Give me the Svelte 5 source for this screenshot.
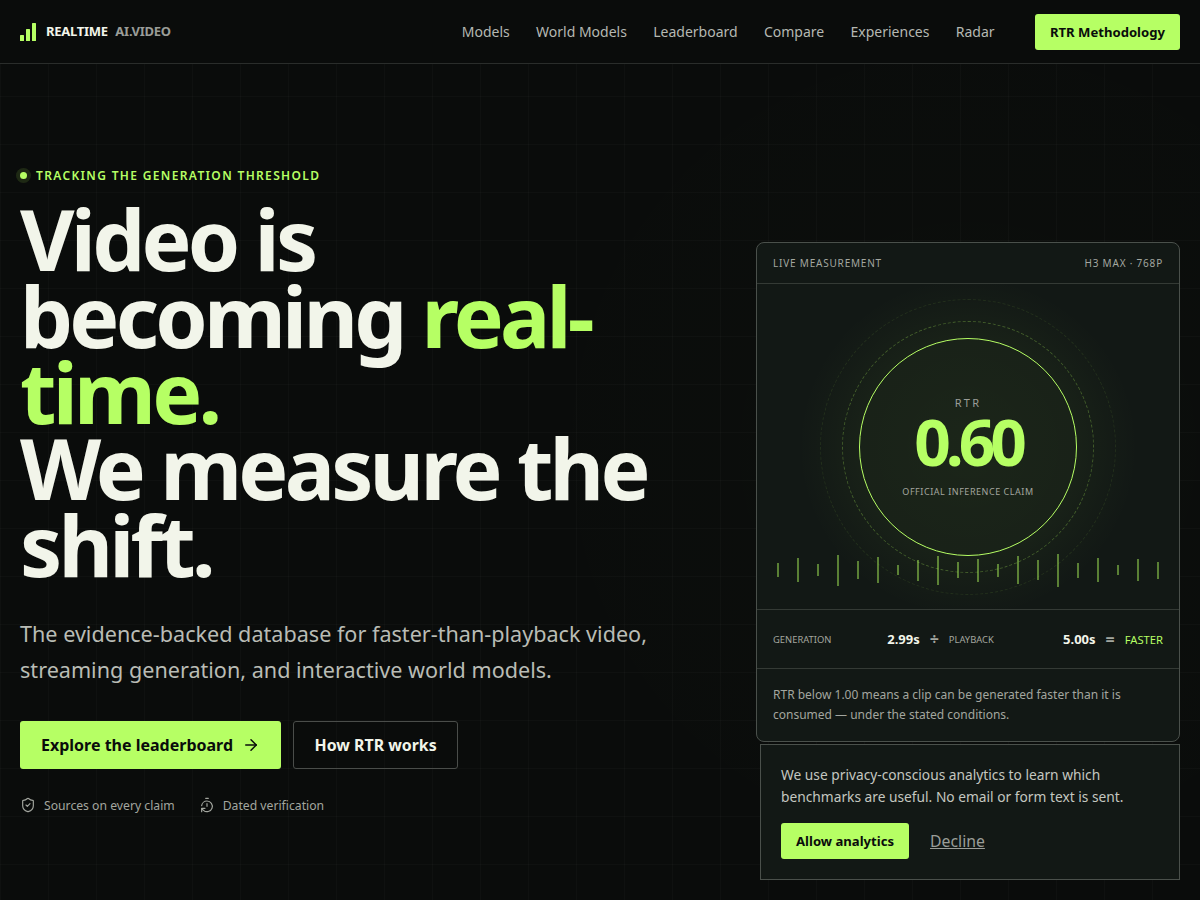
<script lang="ts">
  const NAV = ['Models', 'World Models', 'Leaderboard', 'Compare', 'Experiences', 'Radar'];
  const TICKS = [14, 24, 12, 31, 18, 26, 10, 21, 29, 16, 23, 13, 28, 20, 33, 15, 24, 10, 22, 17];
</script>

<div class="page">
  <header>
    <a class="brand" href="#top">
      <svg width="16" height="18" viewBox="0 0 16 18" aria-hidden="true">
        <rect x="0" y="12" width="4" height="6" rx="0.5" />
        <rect x="6" y="6" width="4" height="12" rx="0.5" />
        <rect x="12" y="0" width="4" height="18" rx="0.5" />
      </svg>
      <span class="brand-a">REALTIME</span>
      <span class="brand-b">AI.VIDEO</span>
    </a>
    <nav>
      {#each NAV as item}
        <a href="#top">{item}</a>
      {/each}
      <a class="nav-cta" href="#top">RTR Methodology</a>
    </nav>
  </header>

  <main>
    <section class="copy">
      <p class="eyebrow"><span class="dot"></span>TRACKING THE GENERATION THRESHOLD</p>
      <h1>Video is becoming <em>real-time.</em><br />We measure the shift.</h1>
      <p class="lede">The evidence-backed database for faster-than-playback video, streaming generation, and interactive world models.</p>
      <div class="actions">
        <a class="btn primary" href="#top">
          Explore the leaderboard
          <svg width="18" height="18" viewBox="0 0 24 24" fill="none" stroke="currentColor" stroke-width="2" stroke-linecap="round" stroke-linejoin="round" aria-hidden="true">
            <path d="M5 12h14" /><path d="m12 5 7 7-7 7" />
          </svg>
        </a>
        <a class="btn ghost" href="#top">How RTR works</a>
      </div>
      <div class="trust">
        <span>
          <svg width="16" height="16" viewBox="0 0 24 24" fill="none" stroke="currentColor" stroke-width="1.75" stroke-linecap="round" stroke-linejoin="round" aria-hidden="true">
            <path d="M20 13c0 5-3.5 7.5-7.66 8.95a1 1 0 0 1-.67-.01C7.5 20.5 4 18 4 13V6a1 1 0 0 1 1-1c2 0 4.5-1.2 6.24-2.72a1.17 1.17 0 0 1 1.52 0C14.51 3.81 17 5 19 5a1 1 0 0 1 1 1z" />
            <path d="m9 12 2 2 4-4" />
          </svg>
          Sources on every claim
        </span>
        <span>
          <svg width="16" height="16" viewBox="0 0 24 24" fill="none" stroke="currentColor" stroke-width="1.75" stroke-linecap="round" stroke-linejoin="round" aria-hidden="true">
            <path d="M10 2h4" /><path d="M12 14v-4" /><path d="M4 13a8 8 0 0 1 8-7 8 8 0 1 1-5.3 14L4 17.6" /><path d="M9 17H4v5" />
          </svg>
          Dated verification
        </span>
      </div>
    </section>

    <aside class="card">
      <div class="card-head">
        <span>LIVE MEASUREMENT</span>
        <span>H3 MAX · 768P</span>
      </div>
      <div class="meter">
        <div class="dial">
          <span class="ring outer"></span>
          <span class="ring middle"></span>
          <div class="ring main">
            <span class="rtr">RTR</span>
            <strong>0.60</strong>
            <span class="claim">OFFICIAL INFERENCE CLAIM</span>
          </div>
        </div>
        <div class="ticks">
          {#each TICKS as h}
            <i style="height: {h}px"></i>
          {/each}
        </div>
      </div>
      <div class="stats">
        <div class="stat">
          <span class="label">GENERATION</span>
          <b>2.99s</b>
        </div>
        <span class="op">÷</span>
        <div class="stat">
          <span class="label">PLAYBACK</span>
          <b>5.00s</b>
        </div>
        <span class="op">=</span>
        <span class="faster">FASTER</span>
      </div>
      <p class="note">RTR below 1.00 means a clip can be generated faster than it is consumed — under the stated conditions.</p>
    </aside>
  </main>

  <div class="cookie">
    <p>We use privacy-conscious analytics to learn which benchmarks are useful. No email or form text is sent.</p>
    <div class="cookie-actions">
      <button class="allow">Allow analytics</button>
      <button class="decline">Decline</button>
    </div>
  </div>
</div>

<style>
  :global(body) {
    background: #0a0c0b;
    color: #f2f5ea;
    font-family: "Noto Sans", sans-serif;
  }

  a {
    color: inherit;
    text-decoration: none;
  }

  .page {
    height: 900px;
    overflow: hidden;
    background-image:
      linear-gradient(rgba(255, 255, 255, 0.018) 1px, transparent 1px),
      linear-gradient(90deg, rgba(255, 255, 255, 0.018) 1px, transparent 1px),
      radial-gradient(circle 480px at 968px 450px, rgba(180, 255, 94, 0.012), transparent);
    background-size: 48px 48px, 48px 48px, auto;
  }

  header {
    height: 63px;
    display: flex;
    align-items: center;
    justify-content: space-between;
    padding: 0 20px;
    background: #0a0c0b;
    border-bottom: 1px solid #2a2d2b;
  }

  .brand {
    display: flex;
    align-items: center;
    font-size: 13px;
    font-weight: 700;
    letter-spacing: -0.02em;
  }

  .brand svg {
    fill: #b6ff64;
    margin-right: 10px;
  }

  .brand span {
    margin-top: -2px;
  }

  .brand-b {
    color: #9a9d98;
    margin-left: 7.5px;
  }

  nav {
    display: flex;
    align-items: center;
    gap: 26.3px;
    font-size: 14px;
    color: #b5b8b2;
  }

  .nav-cta {
    margin-left: 14px;
    padding: 0 15px;
    height: 36px;
    display: flex;
    align-items: center;
    background: #b6ff64;
    color: #0a0c0b;
    border-radius: 3px;
    font-size: 13.12px;
    font-weight: 700;
  }

  main {
    height: 856px;
    display: grid;
    grid-template-columns: 1fr 424px;
    gap: 80px;
    align-items: center;
    padding: 0 20px;
  }

  .copy {
    padding-bottom: 3px;
  }

  .eyebrow {
    display: flex;
    align-items: center;
    margin: 0 0 17px;
    font-size: 12px;
    font-weight: 600;
    letter-spacing: 0.112em;
    color: #b6ff64;
  }

  .dot {
    width: 7px;
    height: 7px;
    margin-right: 9px;
    border-radius: 50%;
    background: #b6ff64;
    box-shadow: 0 0 0 4px rgba(180, 255, 94, 0.12);
  }

  h1 {
    margin: 0;
    font-size: 84px;
    line-height: 76.4px;
    font-weight: 700;
    letter-spacing: -0.045em;
    color: #f2f5ea;
  }

  h1 em {
    font-style: normal;
    color: #b6ff64;
  }

  .lede {
    margin: 33px 0 0;
    font-size: 21.6px;
    line-height: 36px;
    color: #b9bcb5;
  }

  .actions {
    display: flex;
    gap: 12px;
    margin-top: 32.5px;
  }

  .btn {
    height: 48px;
    box-sizing: border-box;
    display: flex;
    align-items: center;
    gap: 9px;
    padding: 0 21px;
    border-radius: 3px;
    font-size: 16px;
    font-weight: 700;
  }

  .primary {
    background: #b6ff64;
    color: #0a0c0b;
  }

  .ghost {
    padding: 0 20.5px;
    font-size: 15.9px;
    border: 1px solid #4a4d4a;
    color: #f2f5ea;
  }

  .trust {
    display: flex;
    gap: 24px;
    margin-top: 28px;
    font-size: 12.2px;
    color: #a3a69f;
  }

  .trust span {
    display: flex;
    align-items: center;
    gap: 8px;
  }

  .card {
    height: 500px;
    box-sizing: border-box;
    display: flex;
    flex-direction: column;
    background: #121815;
    border: 1px solid #4a504b;
    border-radius: 8px;
  }

  .card-head {
    height: 40px;
    flex: none;
    display: flex;
    align-items: center;
    justify-content: space-between;
    padding: 0 16px;
    border-bottom: 1px solid #343a35;
    font-size: 10px;
    letter-spacing: 0.08em;
    color: #a3a7a0;
  }

  .meter {
    height: 325px;
    flex: none;
    position: relative;
    border-bottom: 1px solid #343a35;
    overflow: hidden;
    background: radial-gradient(circle 170px at 50% 163px, rgba(180, 255, 94, 0.06), rgba(180, 255, 94, 0.045) 62%, rgba(180, 255, 94, 0.015) 85%, transparent);
  }

  .dial {
    position: absolute;
    left: 50%;
    top: 163px;
    width: 0;
    height: 0;
  }

  .ring {
    position: absolute;
    border-radius: 50%;
    box-sizing: border-box;
    transform: translate(-50%, -50%);
  }

  .outer {
    width: 296px;
    height: 296px;
    border: 1px dashed rgba(180, 255, 94, 0.09);
  }

  .middle {
    width: 252px;
    height: 252px;
    border: 1px dashed rgba(180, 255, 94, 0.28);
  }

  .main {
    width: 218px;
    height: 218px;
    padding-bottom: 2px;
    border: 1px solid #b6ff64;
    display: flex;
    flex-direction: column;
    align-items: center;
    justify-content: center;
  }

  .rtr {
    font-size: 11px;
    line-height: 15px;
    letter-spacing: 0.2em;
    color: #9a9d98;
  }

  .main strong {
    margin-top: 2px;
    font-size: 64px;
    line-height: 60px;
    font-weight: 700;
    letter-spacing: -0.08em;
    color: #b6ff64;
  }

  .claim {
    margin-top: 14px;
    font-size: 9px;
    line-height: 12px;
    letter-spacing: 0.06em;
    color: #a3a69f;
  }

  .ticks {
    position: absolute;
    left: 20px;
    right: 20px;
    top: 286px;
    height: 0;
    display: flex;
    align-items: center;
    justify-content: space-between;
  }

  .ticks i {
    width: 2px;
    background: rgba(180, 255, 94, 0.45);
  }

  .stats {
    height: 58px;
    flex: none;
    display: flex;
    align-items: center;
    padding: 0 16px;
    border-bottom: 1px solid #343a35;
  }

  .stat {
    flex: 1;
    display: flex;
    align-items: center;
    justify-content: space-between;
  }

  .label {
    font-size: 9.4px;
    color: #a3a69f;
  }

  .stats b {
    font-size: 13px;
    font-weight: 700;
    color: #f2f5ea;
  }

  .op {
    margin: 0 10px;
    font-size: 16px;
    font-weight: 700;
    color: #a3a7a0;
  }

  .faster {
    font-size: 11.2px;
    color: #b6ff64;
  }

  .note {
    margin: 0;
    padding: 16px;
    font-size: 12px;
    line-height: 20px;
    color: #a3a69f;
  }

  .cookie {
    position: fixed;
    right: 20px;
    bottom: 20px;
    width: 420px;
    box-sizing: border-box;
    padding: 20px;
    background: #121815;
    border: 1px solid #4a504b;
  }

  .cookie p {
    margin: -1px 0 0;
    font-size: 13.76px;
    line-height: 22px;
    color: #c4c7c0;
  }

  .cookie-actions {
    display: flex;
    align-items: center;
    gap: 21px;
    margin-top: 15px;
  }

  .cookie button {
    font-family: inherit;
    border: 0;
    background: none;
    padding: 0;
  }

  .cookie .allow {
    height: 36px;
    padding: 0 15px;
    background: #b6ff64;
    color: #0a0c0b;
    border-radius: 3px;
    font-size: 13.12px;
    font-weight: 700;
  }

  .cookie .decline {
    font-size: 15.8px;
    color: #9a9d98;
    text-decoration: underline;
  }
</style>
